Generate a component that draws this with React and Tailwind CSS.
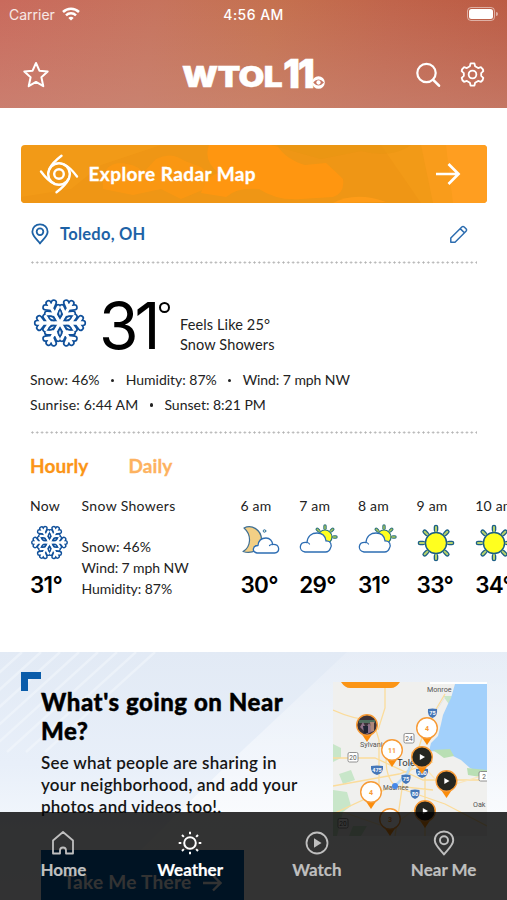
import React from 'react';

function Snowflake({ className, outer = 6.4, inner = 3.2 }) {
  const arm = 'M0 0H22M9.500 0L14 6.200M9.500 0L14 -6.200M16.500 0L20 -4.600M16.500 0L20 4.600';
  const angles = [0, 60, 120, 180, 240, 300];
  return (
    <svg viewBox="-27 -27 54 54" className={className} fill="none" strokeLinecap="round" strokeLinejoin="round">
      {angles.map((a) => (
        <path key={a} d={arm} transform={`rotate(${a})`} stroke="#10509b" strokeWidth={outer} />
      ))}
      {angles.map((a) => (
        <path key={a} d={arm} transform={`rotate(${a})`} stroke="#fff" strokeWidth={inner} />
      ))}
      {angles.map((a) => (
        <path key={a} d="M5.500 0Q9 -3.200 13 0Q9 3.200 5.500 0Z" transform={`rotate(${a + 30})`} fill="#fff" stroke="#10509b" strokeWidth={(outer - inner) / 2} />
      ))}
    </svg>
  );
}

function Sun() {
  const angles = [0, 45, 90, 135, 180, 225, 270, 315];
  return (
    <svg viewBox="-19 -19 38 38" className="h-[38px] w-[38px]" strokeLinecap="round">
      {angles.map((a) => (
        <g key={a} transform={`rotate(${a})`}>
          <path d="M0 -13V-16" stroke="#1c5f86" strokeWidth="4.6" />
          <path d="M0 -11.5V-16" stroke="#b6d36b" strokeWidth="2" />
        </g>
      ))}
      <circle r="10.6" fill="#ffff1f" stroke="#1c5f86" strokeWidth="1.5" />
    </svg>
  );
}

function CloudSun() {
  return (
    <svg viewBox="0 0 38 32" className="mb-[4px] h-8 w-[38px] overflow-visible" strokeLinecap="round" strokeLinejoin="round">
      <g transform="translate(26 12)">
        {[-90, -45, 0, -135].map((a) => (
          <g key={a} transform={`rotate(${a})`}>
            <path d="M8.800 0H11" stroke="#2b7180" strokeWidth="3.400" />
            <path d="M8 0H11" stroke="#a9c957" strokeWidth="1.400" />
          </g>
        ))}
        <circle r="7" fill="#ffff1f" stroke="#2b7180" strokeWidth="1.2" />
      </g>
      <path
        d="M6 27C-1 25.500 0 16.500 8 17.500C8.500 11 13 8 18 8C23.500 8 26.500 11.500 27 16C32 15.500 33 20 31.500 23C30.500 26 28.500 27 26.500 27Z"
        fill="#fff"
        stroke="#2d6db3"
        strokeWidth="1.3"
      />
      <path d="M8 17.500Q9.500 17.500 10.500 19" fill="none" stroke="#2d6db3" strokeWidth="1.2" />
    </svg>
  );
}

function CloudMoon() {
  return (
    <svg viewBox="0 0 38 32" className="mb-[3px] h-8 w-[38px] overflow-visible" strokeLinecap="round" strokeLinejoin="round">
      <path d="M3 3C11 -1 20 5 20.500 14C20.500 23 12 30 2 26.500C10 22 11 10 3 3Z" fill="#f3cf85" stroke="#3f6f93" strokeWidth="1.2" />
      <circle cx="23.500" cy="6" r="1.300" fill="#d7e8d0" stroke="#3c78a8" strokeWidth="1" />
      <path
        d="M16 28C10.500 27 11.500 20.500 17 20.500C17.500 15 21 13 25 13C29 13 31.500 16 31.500 19.500C39 19 39.500 27 33.500 28Z"
        fill="#fff"
        stroke="#2d6db3"
        strokeWidth="1.3"
      />
      <path d="M31.500 19.500Q29.500 19.500 28.500 20.500" fill="none" stroke="#2d6db3" strokeWidth="1.2" />
    </svg>
  );
}

function PinIcon({ className, color, width = 1.8 }) {
  return (
    <svg viewBox="0 0 20 24" className={className} fill="none" stroke={color} strokeWidth={width}>
      <path d="M10 22.500C8 19.500 1.500 14.500 1.500 9.500C1.500 4.600 5.300 1.300 10 1.300C14.700 1.300 18.500 4.600 18.500 9.500C18.500 14.500 12 19.500 10 22.500Z" strokeLinejoin="round" />
      <circle cx="10" cy="9.500" r="3.700" />
    </svg>
  );
}

function Header() {
  return (
    <header className="h-[108px] bg-[linear-gradient(to_bottom,rgba(205,135,115,0)_0%,rgba(205,145,130,0.5)_100%),linear-gradient(100deg,#c96a5c_0%,#c6735d_30%,#c5714f_52%,#c0644b_75%,#bb5a43_100%)] text-white">
      <div className="flex h-[27px] items-center px-[9px] pt-px">
        <div className="flex flex-1 items-center gap-[7px]">
          <span className="font-[Inter,sans-serif] text-[14px] text-white/85">Carrier</span>
          <svg viewBox="0 0 18 14" className="h-[14px] w-[18px]" fill="none" stroke="#fff" strokeWidth="2.500">
            <path d="M1 5A11.500 11.500 0 0 1 17 5" />
            <path d="M4 8.300A7.300 7.300 0 0 1 14 8.300" />
            <path d="M9 13.500L6.300 10.900A4 4 0 0 1 11.700 10.900Z" fill="#fff" stroke="none" />
          </svg>
        </div>
        <span className="font-[Inter,sans-serif] text-[14px] font-medium tracking-[0.450px]">4:56 AM</span>
        <div className="flex flex-1 items-center justify-end gap-px">
          <span className="box-border h-[14px] w-[28px] rounded-[4px] border border-white/50 p-px">
            <span className="block h-full rounded-[2.5px] bg-white" />
          </span>
          <span className="h-[4px] w-[2px] rounded-r-full bg-white/50" />
        </div>
      </div>
      <div className="flex h-[95px] items-center pr-[22px] pl-[22px]">
        <div className="flex h-full flex-1 items-start pt-[34px]">
          <svg viewBox="0 0 28 28" className="h-7 w-7" fill="none" stroke="#fff" strokeWidth="2" strokeLinejoin="round">
            <path d="M14 2L17.400 9.700L25.700 10.500L19.400 16.200L21.300 25.200L14 20.900L6.700 25.200L8.600 16.200L2.300 10.500L10.600 9.700Z" />
          </svg>
        </div>
        <div className="flex h-full w-[143px] items-start pt-[31px] font-[Inter,sans-serif] font-black text-white">
          <span className="mt-[4px] block w-[101px] shrink-0 origin-left scale-x-[1.190] text-[28px] leading-[30px] tracking-[-0.5px] [-webkit-text-stroke:0.500px_#fff]">WTOL</span>
          <span className="block w-[30px] shrink-0 origin-left scale-x-[0.94] text-[40px] leading-[32px] tracking-[-2.500px] [-webkit-text-stroke:0.300px_#fff]">11</span>
          <svg viewBox="0 0 12 12" className="mt-[18px] -ml-px h-[13px] w-[13px] shrink-0">
            <circle cx="6" cy="6" r="5.800" fill="#fff" />
            <path d="M0.900 6Q6 0.500 11.100 6Q6 11.500 0.900 6Z" fill="#c87662" />
            <circle cx="6" cy="6" r="2" fill="#fff" />
          </svg>
        </div>
        <div className="flex h-full flex-1 items-start justify-end gap-[18px] pt-[34px]">
          <svg viewBox="0 0 26 28" className="h-7 w-[26px]" fill="none" stroke="#fff" strokeWidth="2.200" strokeLinecap="round">
            <circle cx="11.500" cy="12" r="9.200" />
            <path d="M18.200 18.800L24 24.700" strokeWidth="2.600" />
          </svg>
          <svg viewBox="0 0 28 28" className="-mr-px h-[27px] w-[27px]" fill="none" stroke="#fff" strokeWidth="1.900" strokeLinejoin="round">
            <path d="M11.300 5.500L12 2.500H16L16.700 5.500L19.800 7.300L22.800 6.400Q25 8 25.200 10.500L23 12.500V15.500L25.200 17.500Q25 20 22.800 21.600L19.800 20.700L16.700 22.500L16 25.500H12L11.300 22.500L8.200 20.700L5.200 21.600Q3 20 2.800 17.500L5 15.500V12.500L2.800 10.500Q3 8 5.200 6.400L8.200 7.300Z" />
            <circle cx="14" cy="14" r="4" />
          </svg>
        </div>
      </div>
    </header>
  );
}

function RadarButton() {
  return (
    <div className="relative mx-[20.500px] h-[58px] overflow-hidden rounded-[4px] bg-[#f29a17]">
      <svg viewBox="0 0 466 58" className="absolute inset-0 h-full w-full">
        <path d="M140 0H360L400 58H0V52L50 44L80 20Z" fill="#ef9615" />
        <path d="M82 44Q80 18 100 18Q118 20 122 28L135 14Q150 6 164 16L180 22Q190 30 184 44L160 54L140 44L112 50Z" fill="#fc9712" opacity=".8" />
        <path d="M188 0H256Q264 14 284 20L305 18Q316 28 322 34Q324 48 312 52L280 54Q256 56 238 44Q216 42 205 52L180 48Q186 30 198 28Q182 16 188 0Z" fill="#ff9610" />
        <path d="M312 58Q335 46 365 57Z" fill="#ff9c18" />
        <path d="M400 0H466V58H412Z" fill="#ff9e20" opacity=".5" />
        <path d="M425 0H466V58H432Z" fill="#ff9e20" />
        <path d="M250 0H390Q370 14 340 6L300 14Z" fill="#e79511" opacity=".5" />
      </svg>
      <div className="relative flex h-full items-center pr-[26px] pl-[18px] text-white">
        <svg viewBox="0 0 40 40" className="h-10 w-10" fill="none" stroke="#fff" strokeWidth="2.400" strokeLinecap="round">
          <circle cx="20" cy="20" r="4.800" />
          <circle cx="20" cy="20" r="10.800" />
          <path d="M22.500 1.800Q13 9 10.500 15M38 22.500Q31 13 25 10.500M17.500 38.200Q27 31 29.500 25M2 17.500Q9 27 15 29.500" />
        </svg>
        <span className="ml-[10px] flex-1 pb-[2px] text-[19px] leading-none font-bold tracking-[0.420px] [-webkit-text-stroke:0.300px]">Explore Radar Map</span>
        <svg viewBox="0 0 26 24" className="h-6 w-[26px]" fill="none" stroke="#fff" strokeWidth="2.700">
          <path d="M1 12H24M13.500 2L23.500 12L13.500 22" />
        </svg>
      </div>
    </div>
  );
}

function Dots() {
  return <div className="mx-[30px] h-[3px] bg-[radial-gradient(circle,#b4b4b4_0.8px,transparent_1.4px)] bg-[length:4.83px_3px]" />;
}

function Bullet() {
  return (
    <span className="flex w-[26px] items-center justify-center">
      <span className="h-[3.500px] w-[3.500px] rounded-full bg-[#222]" />
    </span>
  );
}

function CurrentWeather() {
  return (
    <section>
      <div className="flex h-[58px] items-center pt-[4px] pr-[39px] pl-[31px]">
        <PinIcon className="h-[22px] w-[18px]" color="#1d62a6" width={2} />
        <span className="ml-[11px] flex-1 text-[16.500px] leading-none font-bold tracking-[0.250px] text-[#1d62a6]">Toledo, OH</span>
        <svg viewBox="0 0 19 19" className="h-[19px] w-[19px]" fill="none" stroke="#2d6db0" strokeWidth="1.500" strokeLinejoin="round">
          <path d="M1.800 13L12.800 2Q14 .9 15.200 2L17 3.800Q18.100 5 17 6.200L6 17.200H1.800ZM11.200 3.600L15.400 7.800" />
        </svg>
      </div>
      <Dots />
      <div className="flex h-[96px] items-start pt-[31px] pl-[32px]">
        <Snowflake className="h-[56px] w-[56px]" />
        <span className="mt-[-2px] ml-[11px] w-[60px] font-[Inter,sans-serif] text-[64px] leading-[66px] font-normal tracking-[-4px] text-black">31</span>
        <span className="mt-[7px] h-[11px] w-[11px] rounded-full border-2 border-black" />
        <div className="mt-[20px] ml-[10px] text-[14.500px] leading-[19.500px] tracking-[0.120px] text-[#222]">
          <p>Feels Like 25°</p>
          <p>Snow Showers</p>
        </div>
      </div>
      <div className="flex flex-col pt-[8px] pb-[14px] pl-[30px] text-[14px] leading-[24.500px] text-[#222]">
        <div className="flex">
          <span className="tracking-[0.120px]">Snow: 46%</span><Bullet /><span className="tracking-[-0.020px]">Humidity: 87%</span><Bullet /><span className="tracking-[-0.070px]">Wind: 7 mph NW</span>
        </div>
        <div className="flex">
          <span className="tracking-[0.180px]">Sunrise: 6:44 AM</span><Bullet /><span>Sunset: 8:21 PM</span>
        </div>
      </div>
      <Dots />
    </section>
  );
}

const hours = [
  { time: '6 am', temp: '30°', icon: 'moon' },
  { time: '7 am', temp: '29°', icon: 'cloud' },
  { time: '8 am', temp: '31°', icon: 'cloud' },
  { time: '9 am', temp: '33°', icon: 'sun' },
  { time: '10 am', temp: '34°', icon: 'sun' },
];

function Temperature({ children }) {
  return <p className="font-[Inter,sans-serif] text-[22.500px] leading-[30px] font-semibold tracking-[-0.700px] text-black">{children}</p>;
}

function Hourly() {
  return (
    <section className="h-[218px]">
      <div className="flex h-[63px] items-center gap-[40px] pt-px pl-[30px] text-[19px] font-bold tracking-[0.100px] [-webkit-text-stroke:0.300px]">
        <span className="text-[#fb9516]">Hourly</span>
        <span className="text-[#fdb260]">Daily</span>
      </div>
      <div className="flex overflow-hidden pl-[30px] whitespace-nowrap text-[#222]">
        <div className="w-[51.500px] shrink-0">
          <p className="text-[14px] leading-[18px] tracking-[0.200px]">Now</p>
          <div className="flex h-[55px] items-center"><Snowflake className="h-[39px] w-[39px]" outer={7} inner={3.2} /></div>
          <Temperature>31°</Temperature>
        </div>
        <div className="w-[159px] shrink-0 text-[14px] leading-[21px]">
          <p className="mb-[21px] leading-[18px] tracking-[0.350px]">Snow Showers</p>
          <p className="tracking-[0.100px]">Snow: 46%</p>
          <p className="tracking-[-0.080px]">Wind: 7 mph NW</p>
          <p className="tracking-[-0.050px]">Humidity: 87%</p>
        </div>
        {hours.map((h) => (
          <div key={h.time} className="w-[58.700px] shrink-0">
            <p className="text-[14px] leading-[18px] tracking-[0.200px]">{h.time}</p>
            <div className="flex h-[55px] items-center">
              {h.icon === 'moon' && <CloudMoon />}
              {h.icon === 'cloud' && <CloudSun />}
              {h.icon === 'sun' && <Sun />}
            </div>
            <Temperature>{h.temp}</Temperature>
          </div>
        ))}
      </div>
    </section>
  );
}

function MapPin({ x, y, label, play, photo }) {
  return (
    <g transform={`translate(${x} ${y})`}>
      <path d="M-6 8L0 17L6 8Z" fill="#fb8c0b" />
      <circle r="10.300" fill={play ? '#252620' : photo ? '#3c3237' : '#fff'} stroke="#f79a35" strokeWidth="1.400" />
      {play && <path d="M-2.200 -3L3 0L-2.200 3Z" fill="#fff" />}
      {photo && (
        <g>
          <path d="M-8 -5H8V-2H-8Z" fill="#4f705e" />
          <path d="M-7 2L-4 -3L-1 3L2 -2L7 6L0 9Z" fill="#8e7188" />
          <path d="M3 -3H7V6H4Z" fill="#ad8779" />
          <path d="M-4 1H1V8H-3Z" fill="#1e2433" />
        </g>
      )}
      {label && <text y="2.500" textAnchor="middle" fontSize="7" fontWeight="700" fill="#f79a35">{label}</text>}
    </g>
  );
}

function Shield({ x, y, label, w = 9 }) {
  return (
    <g transform={`translate(${x} ${y})`}>
      <path d={`M${-w / 2} -4Q0 -5 ${w / 2} -4Q${w / 2 + 1} 3 0 5Q${-w / 2 - 1} 3 ${-w / 2} -4Z`} fill="#4476b8" />
      <text y="2" textAnchor="middle" fontSize="5.500" fontWeight="700" fill="#fff">{label}</text>
    </g>
  );
}

function RouteBox({ x, y, label }) {
  return (
    <g transform={`translate(${x} ${y})`}>
      <rect x="-5" y="-4.500" width="10" height="9.500" rx="1.500" fill="#fff" stroke="#777" strokeWidth=".8" />
      <text y="2.700" textAnchor="middle" fontSize="6.500" fill="#555">{label}</text>
    </g>
  );
}

function MapPreview() {
  return (
    <svg viewBox="0 0 154 154" className="h-[154px] w-[154px] font-[Roboto,sans-serif]">
      <rect width="154" height="154" fill="#f0f0ee" />
      <path d="M97 0H154V2H97Z" fill="#fff" />
      <path d="M0 108L14 110L18 124L10 130L4 154H0ZM16 154L20 144H34L28 154ZM118 25L110 14H119ZM0 62L8 66V76L0 80ZM6 92L18 88L22 98L10 102Z" fill="#c8e6c9" />
      <path d="M122 2H154V94L137 86L128 78L112 70L96 69L98 61L105 54L108 42L110 33L115 22L118 16Z" fill="#a2d0fb" />
      <path d="M100 68L117 67L121 74L111 76ZM134 86L154 88V96L135 93Z" fill="#b9dfb4" />
      <g fill="none" stroke="#fbdc9b" strokeWidth="1.300">
        <path d="M0 28Q22 38 40 38L46 58V106M52 6V26L45 48M0 76H42L90 98H154M0 104L66 92L100 80M112 12L92 46L80 84L70 100L62 154M0 132L60 104L112 122L154 144M92 94V154M56 60Q48 90 62 104L100 108" />
        <path d="M78 70L110 106L154 92M10 130L56 146L92 120" stroke="#fae6bb" />
      </g>
      <path d="M81 75L74 92L62 104" fill="none" stroke="#b8dcf7" strokeWidth="2.500" />
      <path d="M112 15L100 34L90 51" fill="none" stroke="#e4e4e4" strokeWidth="1" />
      <path d="M8 0H67Q63 6 58 6H17Q12 6 8 0Z" fill="#fb9516" />
      <g fill="#555" fontSize="7.200">
        <text x="94" y="10">Monroe</text>
        <text x="27" y="65">Sylvania</text>
        <text x="64" y="84" fontSize="9.500" fill="#333">Toledo</text>
        <text x="50" y="108" fontSize="6.500">Maumee</text>
        <text x="140" y="125">Oak</text>
      </g>
      <circle cx="62" cy="104" r="3" fill="#4688e8" />
      <Shield x={99.500} y={31} label="75" />
      <Shield x={44} y={88} label="475" w={12} />
      <Shield x={73} y={97} label="75" />
      <Shield x={89} y={91} label="280" w={12} />
      <Shield x={82} y={112} label="80" />
      <RouteBox x={76} y={56} label="24" />
      <RouteBox x={20} y={75} label="20" />
      <RouteBox x={151} y={94} label="2" />
      <RouteBox x={10} y={141} label="20" />
      <MapPin x={34} y={43} photo />
      <MapPin x={94} y={46} label="4" />
      <MapPin x={59} y={68} label="11" />
      <MapPin x={38} y={110} label="4" />
      <MapPin x={57} y={137} label="3" />
      <MapPin x={89} y={75} play />
      <MapPin x={113.500} y={99} play />
      <MapPin x={92} y={129} play />
    </svg>
  );
}

function NearMePromo() {
  return (
    <section className="relative h-[248px] overflow-hidden bg-[linear-gradient(to_bottom,#e2eaf5_0%,#e8eff9_45%,#f4f8fd_75%,#f8fafd_100%)]">
      <svg viewBox="0 0 507 248" className="absolute inset-0 h-full w-full">
        <defs>
          <linearGradient id="glow" x1="0" y1="0" x2="0" y2="1">
            <stop offset="0" stopColor="#fff" stopOpacity=".15" />
            <stop offset="1" stopColor="#fff" stopOpacity=".85" />
          </linearGradient>
        </defs>
        <path d="M347 0H507V248H90L230 110Z" fill="url(#glow)" />
        <g stroke="#f5f9fd" strokeWidth="2.500" opacity=".5">
          {[22, 41, 60, 79, 98, 117, 136, 155].map((x) => (
            <path key={x} d={`M${x} 0L${x - 110} 100`} />
          ))}
        </g>
      </svg>
      <div className="relative flex items-start pt-[20px] pl-[20.500px]">
        <div className="h-[19px] w-[20px] shrink-0 border-t-[7px] border-l-[7px] border-[#0a5caa]" />
        <div className="mt-[15px] flex w-[272px] shrink-0 flex-col items-start pl-[0.500px] text-black">
          <h2 className="text-[24px] leading-[29px] font-black tracking-[0.550px] whitespace-nowrap [-webkit-text-stroke:0.400px]">What's going on Near<br />Me?</h2>
          <p className="mt-[7px] text-[17px] leading-[22px] font-semibold tracking-[0.240px] whitespace-nowrap text-[#161616]">
            See what people are sharing in<br />your neighborhood, and add your<br />photos and videos too!.
          </p>
          <div className="mt-[32px] flex h-[60px] w-[203px] items-start justify-center gap-[10px] bg-[#005eb0] pt-[21px] text-[19px] leading-[22px] font-bold tracking-[0.300px] text-white">
            Take Me There
            <svg viewBox="0 0 20 20" className="mt-[2px] h-5 w-5" fill="none" stroke="#fff" strokeWidth="2.400">
              <path d="M1 10H18M11 2.500L18.500 10L11 17.500" />
            </svg>
          </div>
        </div>
        <div className="mt-[9.500px] ml-[20px]"><MapPreview /></div>
      </div>
    </section>
  );
}

function TabBar() {
  return (
    <nav className="absolute inset-x-0 bottom-0 grid h-[88px] grid-cols-4 bg-[#000]/80 pt-[18px] text-center text-[17px] font-bold text-[#bfbfbf] [-webkit-text-stroke:0.200px]">
      <div className="flex flex-col items-center gap-[4px]">
        <svg viewBox="0 0 24 26" className="h-[26px] w-6" fill="none" stroke="#bfbfbf" strokeWidth="1.800" strokeLinejoin="round">
          <path d="M2 23.500V10.500L12 2L22 10.500V23.500H15V20.500Q15 17.500 12 17.500Q9 17.500 9 20.500V23.500Z" />
        </svg>
        <span className="leading-[20px]">Home</span>
      </div>
      <div className="flex flex-col items-center gap-[4px] text-white">
        <svg viewBox="-13 -13 26 26" className="h-[26px] w-[26px]" fill="none" stroke="#fff" strokeWidth="2">
          <circle r="5.800" />
          {[0, 45, 90, 135, 180, 225, 270, 315].map((a) => (
            <path key={a} d="M0 -8.700V-11.300" transform={`rotate(${a})`} />
          ))}
        </svg>
        <span className="leading-[20px]">Weather</span>
      </div>
      <div className="flex flex-col items-center gap-[4px]">
        <svg viewBox="0 0 26 26" className="h-[26px] w-[26px]" fill="none" stroke="#bfbfbf" strokeWidth="1.800">
          <circle cx="13" cy="13" r="10.500" />
          <path d="M10 8.300L17.500 13L10 17.700Z" fill="#bfbfbf" stroke="none" />
        </svg>
        <span className="leading-[20px]">Watch</span>
      </div>
      <div className="flex flex-col items-center gap-[4px]">
        <PinIcon className="h-[26px] w-[22px]" color="#bfbfbf" width={1.8} />
        <span className="leading-[20px]">Near Me</span>
      </div>
    </nav>
  );
}

export default function App() {
  return (
    <div className="relative h-[900px] w-[507px] overflow-hidden bg-white font-[Lato,sans-serif]">
      <Header />
      <main className="pt-[37px]">
        <RadarButton />
        <CurrentWeather />
        <Hourly />
        <NearMePromo />
      </main>
      <TabBar />
    </div>
  );
}
